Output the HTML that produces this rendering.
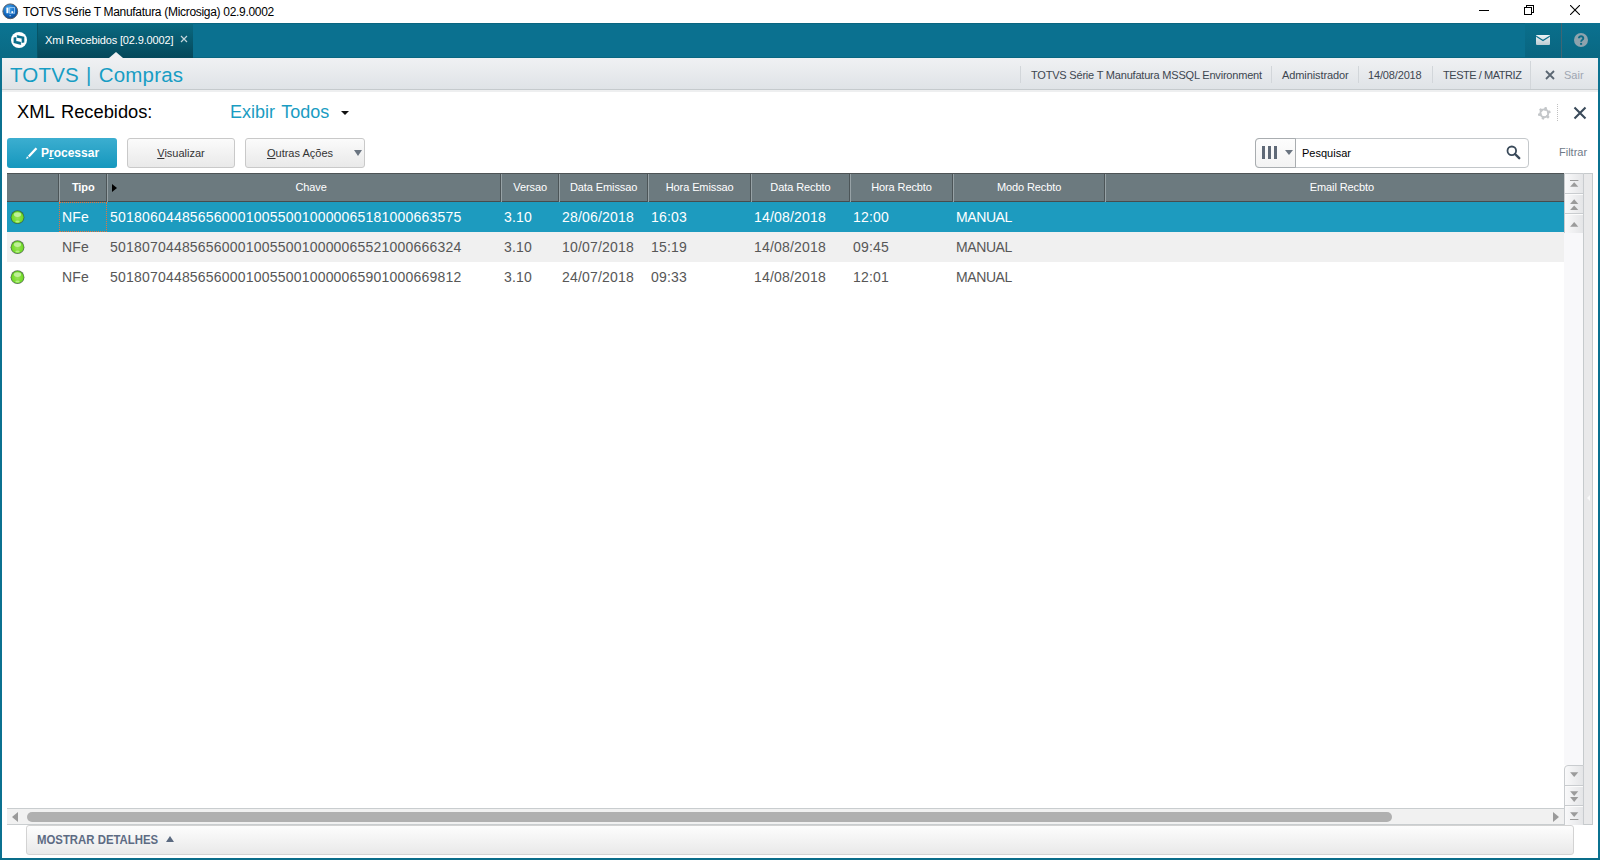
<!DOCTYPE html>
<html><head><meta charset="utf-8">
<style>
*{margin:0;padding:0;box-sizing:border-box}
html,body{width:1600px;height:860px;overflow:hidden;background:#fff;font-family:"Liberation Sans",sans-serif}
.a{position:absolute}
.nw{white-space:nowrap}
#titlebar{left:0;top:0;width:1600px;height:23px;background:#fff}
#tabbar{left:0;top:23px;width:1600px;height:35px;background:#0b7190}
.htxt{position:absolute;top:68px;font-size:11px;color:#3d4650;white-space:nowrap;line-height:14px}
.hsep{position:absolute;top:66px;width:1px;height:17px;background:#d2d6da}
.btn{position:absolute;top:138px;height:30px;border:1px solid #c9c9c9;border-radius:3px;background:linear-gradient(#fbfbfb,#e9e9e9);font-size:11px;color:#333;text-align:center;line-height:28px;white-space:nowrap}
.u{text-decoration:underline}
#grid{left:7px;top:173px;width:1557px;height:636px;background:#fff}
.gh{position:absolute;left:0;top:0;width:1557px;height:29px;background:#6c7a7f;border-top:1px solid #4e5456;border-bottom:1px solid #474c4e}
.cs{position:absolute;top:0;width:2px;height:28px;border-left:1px solid #4c5558;border-right:1px solid #97a2a6}
.hc{position:absolute;top:7px;width:200px;text-align:center;font-size:11px;letter-spacing:-0.1px;color:#fff;white-space:nowrap;line-height:12px}
.row{position:absolute;left:0;width:1557px;height:30px}
.rc{position:absolute;top:6.5px;font-size:14px;letter-spacing:0.2px;white-space:nowrap;line-height:16px}
.led{position:absolute;left:4px;top:8px;width:14px;height:14px;border-radius:50%;background:radial-gradient(circle at 45% 35%,#e2f7b8 0,#98d64a 35%,#4e9e1c 100%);border:1px solid #5a8a3a}
.sbtn{position:absolute;left:1564px;width:19px;border:1px solid #d3d6d8;background:linear-gradient(90deg,#fafafa,#e6e7e8)}
.tri-up{position:absolute;width:0;height:0;border-left:4px solid transparent;border-right:4px solid transparent;border-bottom:6px solid #9a9a9a}
.tri-dn{position:absolute;width:0;height:0;border-left:4px solid transparent;border-right:4px solid transparent;border-top:6px solid #9a9a9a}
</style></head>
<body>
<svg width="0" height="0" style="position:absolute">
  <defs>
    <radialGradient id="lg" cx="50%" cy="55%" r="55%"><stop offset="0" stop-color="#9ae05a"/><stop offset="0.75" stop-color="#74dc2a"/><stop offset="1" stop-color="#5ccc18"/></radialGradient>
    <g id="led">
      <circle cx="7.5" cy="8.2" r="6.9" fill="#3f5e3c" opacity="0.85"/>
      <circle cx="7.5" cy="8.2" r="6.1" fill="url(#lg)"/>
      <ellipse cx="7.5" cy="5.6" rx="3.6" ry="2.3" fill="#d6f6b8" opacity="0.75"/>
      <ellipse cx="7.5" cy="12.4" rx="2.2" ry="1" fill="#c4f49a" opacity="0.8"/>
    </g>
  </defs>
</svg>
<!-- title bar -->
<div id="titlebar" class="a">
  <svg class="a" style="left:2px;top:3px" width="17" height="17" viewBox="0 0 17 17">
    <defs><radialGradient id="tg" cx="40%" cy="30%" r="70%"><stop offset="0" stop-color="#4aa8ee"/><stop offset="0.55" stop-color="#1670c8"/><stop offset="1" stop-color="#0a4a98"/></radialGradient></defs>
    <circle cx="8.3" cy="8.3" r="7.4" fill="url(#tg)" stroke="#5a6068" stroke-width="1"/>
    <rect x="4.4" y="4.6" width="2" height="5.6" fill="#fff"/>
    <rect x="7.6" y="4.6" width="5" height="5.6" fill="none" stroke="#9cc8f0" stroke-width="0.9"/>
    <rect x="9.4" y="8.2" width="1.8" height="1.8" fill="#fff"/>
    <rect x="7.4" y="12" width="1.6" height="1.2" fill="#8ab0d8"/>
  </svg>
  <div class="a nw" style="left:23px;top:4.6px;font-size:12px;letter-spacing:-0.3px;color:#000;line-height:14px">TOTVS Série T Manufatura (Microsiga) 02.9.0002</div>
  <div class="a" style="left:1479px;top:10px;width:10px;height:1px;background:#000"></div>
  <div class="a" style="left:1526px;top:5px;width:8px;height:8px;border:1px solid #000"></div>
  <div class="a" style="left:1524px;top:7px;width:8px;height:8px;border:1px solid #000;background:#fff"></div>
  <svg class="a" style="left:1570px;top:5px" width="10" height="10" viewBox="0 0 10 10"><path d="M0 0L10 10M10 0L0 10" stroke="#000" stroke-width="1.1"/></svg>
</div>

<!-- frame borders -->
<div class="a" style="left:0;top:58px;width:2px;height:802px;background:#0b7190"></div>
<div class="a" style="left:1598px;top:58px;width:2px;height:802px;background:#0b7190"></div>
<div class="a" style="left:0;top:858px;width:1600px;height:2px;background:#0a6d8a"></div>

<!-- tab bar -->
<div id="tabbar" class="a">
  <div class="a" style="left:0;top:0;width:37px;height:35px;background:linear-gradient(#0b7492,#0a6a84)"></div>
  <svg class="a" style="left:11px;top:9px" width="16" height="16" viewBox="0 0 16 16">
    <circle cx="8" cy="8" r="8" fill="#fff"/>
    <path d="M2.6 5.4 L5.6 4.9 L5.6 8.9 L10.2 9.9 L10.2 13.0 L2.6 11.0 Z" fill="#0b6f8c"/>
    <path d="M5.7 2.9 L13.3 4.8 L13.3 10.6 L10.3 11.1 L10.3 6.6 L5.7 5.7 Z" fill="#0b6f8c"/>
    <path d="M5.65 2.6 V9.2 M10.35 6.6 V13.2" stroke="#fff" stroke-width="0.6"/>
  </svg>
  <div class="a" style="left:37px;top:0;width:1px;height:35px;background:#075466"></div>
  <div class="a" style="left:38px;top:0;width:155px;height:35px;background:linear-gradient(#0a6a82,#05485a)"></div>
  <div class="a nw" style="left:45px;top:11px;font-size:11px;color:#fff;line-height:13px;letter-spacing:-0.15px">Xml Recebidos [02.9.0002]</div>
  <svg class="a" style="left:180px;top:12px" width="8" height="8" viewBox="0 0 8 8"><path d="M1 1L7 7M7 1L1 7" stroke="#c5d6dc" stroke-width="1.2"/></svg>
  <div class="a" style="left:109px;top:29px;width:0;height:0;border-left:7px solid transparent;border-right:7px solid transparent;border-bottom:6px solid #eff0f2"></div>
  <div class="a" style="left:1525px;top:0;width:37px;height:35px;background:linear-gradient(#0a6f8c,#096580)"></div>
  <div class="a" style="left:1562px;top:0;width:38px;height:35px;background:linear-gradient(#0b7190,#096882)"></div>
  <div class="a" style="left:1561px;top:0;width:1px;height:35px;background:#3f6674"></div>
  <svg class="a" style="left:1536px;top:12px" width="14" height="10" viewBox="0 0 14 10">
    <defs><linearGradient id="mg" x1="0" y1="0" x2="0" y2="1"><stop offset="0" stop-color="#eef3f6"/><stop offset="1" stop-color="#bccbd2"/></linearGradient></defs>
    <rect x="0" y="0" width="14" height="10" rx="1" fill="url(#mg)"/>
    <path d="M0.2 1.2 L7 5.6 L13.8 1.2" fill="none" stroke="#0a6d8a" stroke-width="1.3"/>
  </svg>
  <svg class="a" style="left:1574px;top:10px" width="15" height="15" viewBox="0 0 15 15">
    <circle cx="7" cy="7" r="7" fill="#8ea3ad"/>
    <path d="M4.9 5.2 C4.9 2.6 9.3 2.6 9.3 5.2 C9.3 6.9 7.1 6.9 7.1 8.8" fill="none" stroke="#0b6b86" stroke-width="1.9"/>
    <rect x="6.1" y="9.9" width="2" height="1.9" fill="#0b6b86"/>
  </svg>
</div>

<div class="a" style="left:193px;top:23px;width:1332px;height:1px;background:#0a6580"></div>
<div class="a" style="left:193px;top:57px;width:1332px;height:1px;background:#096781"></div>
<!-- header -->
<div class="a" style="left:2px;top:58px;width:1596px;height:31px;background:linear-gradient(#f0f1f3,#dfe3e7)"></div>
<div class="a" style="left:2px;top:89px;width:1596px;height:1px;background:#c5cacd"></div>
<div class="a" style="left:2px;top:90px;width:1596px;height:2px;background:#eeeff0"></div>
<div class="a nw" style="left:10px;top:63px;font-size:20.5px;letter-spacing:0.2px;word-spacing:1.2px;color:#179dc4;line-height:24px">TOTVS | Compras</div>
<div class="hsep" style="left:1020px"></div>
<div class="htxt" style="left:1031px;letter-spacing:-0.2px">TOTVS Série T Manufatura MSSQL Environment</div>
<div class="hsep" style="left:1271px"></div>
<div class="htxt" style="left:1282px;letter-spacing:-0.1px">Administrador</div>
<div class="hsep" style="left:1358px"></div>
<div class="htxt" style="left:1368px;letter-spacing:-0.15px">14/08/2018</div>
<div class="hsep" style="left:1432px"></div>
<div class="htxt" style="left:1443px;letter-spacing:-0.45px">TESTE / MATRIZ</div>
<div class="hsep" style="left:1530px;top:61px;height:28px"></div>
<svg class="a" style="left:1545px;top:70px" width="10" height="10" viewBox="0 0 10 10"><path d="M1 1L9 9M9 1L1 9" stroke="#5a6672" stroke-width="1.8"/></svg>
<div class="htxt" style="left:1564px;color:#9fa6b2">Sair</div>

<!-- page title row -->
<div class="a nw" style="left:17px;top:101px;font-size:18.3px;word-spacing:2px;color:#000;line-height:22px">XML Recebidos:</div>
<div class="a nw" style="left:230px;top:101px;font-size:18px;word-spacing:1.6px;color:#1a9cc2;line-height:22px">Exibir Todos</div>
<div class="a" style="left:341px;top:111px;width:0;height:0;border-left:4px solid transparent;border-right:4px solid transparent;border-top:4px solid #111"></div>
<svg class="a" style="left:1537px;top:105.5px" width="15" height="15" viewBox="0 0 15 15">
  <g fill="#c4c7ca"><rect x="6.0" y="0.9" width="2.6" height="3.6" rx="0.8" transform="rotate(15 7.3 7.3)"/><rect x="6.0" y="0.9" width="2.6" height="3.6" rx="0.8" transform="rotate(75 7.3 7.3)"/><rect x="6.0" y="0.9" width="2.6" height="3.6" rx="0.8" transform="rotate(135 7.3 7.3)"/><rect x="6.0" y="0.9" width="2.6" height="3.6" rx="0.8" transform="rotate(195 7.3 7.3)"/><rect x="6.0" y="0.9" width="2.6" height="3.6" rx="0.8" transform="rotate(255 7.3 7.3)"/><rect x="6.0" y="0.9" width="2.6" height="3.6" rx="0.8" transform="rotate(315 7.3 7.3)"/></g>
  <circle cx="7.3" cy="7.3" r="3.95" fill="none" stroke="#c4c7ca" stroke-width="1.9"/>
</svg>
<div class="a" style="left:1557px;top:104px;width:1px;height:17px;border-left:1px dotted #c0c0c0"></div>
<svg class="a" style="left:1573px;top:106px" width="14" height="14" viewBox="0 0 14 14"><path d="M1.5 1.5L12.5 12.5M12.5 1.5L1.5 12.5" stroke="#3a4a5a" stroke-width="2.1"/></svg>

<!-- buttons -->
<div class="a" style="left:7px;top:138px;width:110px;height:30px;border-radius:3px;background:linear-gradient(#3caed0,#1597bd)"></div>
<svg class="a" style="left:26px;top:147px" width="12" height="12" viewBox="0 0 12 12"><path d="M1.9 8.7 L9.6 0.4 L11.3 2.0 L3.6 10.3 Z" fill="#fff"/><path d="M0.1 11.9 L1.0 9.3 L2.8 11.0 Z" fill="#fff"/></svg>
<div class="a nw" style="left:41px;top:145px;font-size:12px;font-weight:bold;color:#fff;line-height:16px">P<span class="u">r</span>ocessar</div>
<div class="btn" style="left:127px;width:108px"><span class="u">V</span>isualizar</div>
<div class="btn" style="left:245px;width:120px;padding-right:10px"><span class="u">O</span>utras Ações</div>
<div class="a" style="left:354px;top:150px;width:0;height:0;border-left:4px solid transparent;border-right:4px solid transparent;border-top:6px solid #6a7480"></div>

<!-- search -->
<div class="a" style="left:1255px;top:138px;width:274px;height:30px;border:1px solid #c4c8cb;border-radius:4px;background:#fff"></div>
<div class="a" style="left:1255px;top:138px;width:41px;height:30px;border:1px solid #a9adb0;border-radius:4px 0 0 4px;background:linear-gradient(#fdfdfd,#f3f3f3)"></div>
<div class="a" style="left:1262px;top:146px;width:3px;height:13px;background:#5f6977"></div>
<div class="a" style="left:1268px;top:146px;width:3px;height:13px;background:#5f6977"></div>
<div class="a" style="left:1274px;top:146px;width:3px;height:13px;background:#5f6977"></div>
<div class="a" style="left:1285px;top:150px;width:0;height:0;border-left:4px solid transparent;border-right:4px solid transparent;border-top:5px solid #6a7480"></div>
<div class="a nw" style="left:1302px;top:146px;font-size:11px;color:#000;line-height:14px">Pesquisar</div>
<svg class="a" style="left:1506px;top:145px" width="15" height="15" viewBox="0 0 15 15"><circle cx="5.8" cy="5.8" r="4.3" fill="none" stroke="#3a4a5a" stroke-width="1.8"/><path d="M9 9 L13.2 13.2" stroke="#3a4a5a" stroke-width="2.4" stroke-linecap="round"/></svg>
<div class="a nw" style="left:1559px;top:145px;font-size:11px;color:#6f7a88;line-height:14px">Filtrar</div>

<!-- grid -->
<div id="grid" class="a">
  <div class="gh">
    <div class="cs" style="left:51px"></div>
    <div class="cs" style="left:99px"></div>
    <div class="cs" style="left:493px"></div>
    <div class="cs" style="left:551px"></div>
    <div class="cs" style="left:640px"></div>
    <div class="cs" style="left:743px"></div>
    <div class="cs" style="left:842px"></div>
    <div class="cs" style="left:945px"></div>
    <div class="cs" style="left:1097px"></div>
    <div class="hc" style="left:-23.8px;font-weight:bold">Tipo</div>
    <div class="a" style="left:105px;top:10px;width:0;height:0;border-top:4px solid transparent;border-bottom:4px solid transparent;border-left:5px solid #000"></div>
    <div class="hc" style="left:204.1px">Chave</div>
    <div class="hc" style="left:423.2px">Versao</div>
    <div class="hc" style="left:496.6px">Data Emissao</div>
    <div class="hc" style="left:592.7px">Hora Emissao</div>
    <div class="hc" style="left:693.4px">Data Recbto</div>
    <div class="hc" style="left:794.5px">Hora Recbto</div>
    <div class="hc" style="left:922.1px">Modo Recbto</div>
    <div class="hc" style="left:1234.9px">Email Recbto</div>
  </div>
  <div class="row" style="top:29px;background:#1d9bbf;color:#fff">
    <svg class="a" style="left:3px;top:7px" width="16" height="16" viewBox="0 0 16 16"><use href="#led"/></svg>
    <div class="a" style="left:52px;top:0;width:48px;height:30px;border:1px dotted #e8743a"></div>
    <div class="rc" style="left:55px">NFe</div>
    <div class="rc" style="left:103px">50180604485656000100550010000065181000663575</div>
    <div class="rc" style="left:497px">3.10</div>
    <div class="rc" style="left:555px">28/06/2018</div>
    <div class="rc" style="left:644px">16:03</div>
    <div class="rc" style="left:747px">14/08/2018</div>
    <div class="rc" style="left:846px">12:00</div>
    <div class="rc" style="left:949px;letter-spacing:-0.4px">MANUAL</div>
  </div>
  <div class="row" style="top:59px;background:#f0f0f0;color:#575757">
    <svg class="a" style="left:3px;top:7px" width="16" height="16" viewBox="0 0 16 16"><use href="#led"/></svg>
    <div class="rc" style="left:55px">NFe</div>
    <div class="rc" style="left:103px">50180704485656000100550010000065521000666324</div>
    <div class="rc" style="left:497px">3.10</div>
    <div class="rc" style="left:555px">10/07/2018</div>
    <div class="rc" style="left:644px">15:19</div>
    <div class="rc" style="left:747px">14/08/2018</div>
    <div class="rc" style="left:846px">09:45</div>
    <div class="rc" style="left:949px;letter-spacing:-0.4px">MANUAL</div>
  </div>
  <div class="row" style="top:89px;background:#fff;color:#575757">
    <svg class="a" style="left:3px;top:7px" width="16" height="16" viewBox="0 0 16 16"><use href="#led"/></svg>
    <div class="rc" style="left:55px">NFe</div>
    <div class="rc" style="left:103px">50180704485656000100550010000065901000669812</div>
    <div class="rc" style="left:497px">3.10</div>
    <div class="rc" style="left:555px">24/07/2018</div>
    <div class="rc" style="left:644px">09:33</div>
    <div class="rc" style="left:747px">14/08/2018</div>
    <div class="rc" style="left:846px">12:01</div>
    <div class="rc" style="left:949px;letter-spacing:-0.4px">MANUAL</div>
  </div>
</div>

<!-- vertical scrollbar -->
<div class="a" style="left:1564px;top:233px;width:19px;height:532px;background:#f8f8fa"></div>
<div class="a" style="left:1583px;top:173px;width:10px;height:652px;border:1px solid #c6cacc;background:#e9e9ea"></div>
<div class="a" style="left:1587px;top:495px;width:0;height:0;border-top:3.5px solid transparent;border-bottom:3.5px solid transparent;border-right:3.5px solid #fafafa"></div>
<svg class="a" style="left:1564px;top:173px" width="20" height="61" viewBox="0 0 20 61">
  <defs><linearGradient id="sg" x1="0" y1="0" x2="1" y2="0"><stop offset="0" stop-color="#fafafb"/><stop offset="1" stop-color="#e3e4e6"/></linearGradient></defs>
  <rect x="0" y="0" width="20" height="60" fill="url(#sg)"/>
  <path d="M0.5 60 V0.5 H19.5 V60" fill="none" stroke="#c9cccf" stroke-width="1"/>
  <rect x="0" y="20" width="20" height="1" fill="#c9cccf"/><rect x="1" y="21" width="18" height="1" fill="#fbfbfb"/>
  <rect x="0" y="40" width="20" height="1" fill="#c9cccf"/><rect x="1" y="41" width="18" height="1" fill="#fbfbfb"/>
  <g fill="#9b9b9b">
    <rect x="6" y="7" width="8.4" height="1"/>
    <path d="M6.1 13.7 H14.3 L10.2 9.2 Z"/>
    <path d="M6.1 31 H14.3 L10.2 26.3 Z"/>
    <path d="M6.1 37 H14.3 L10.2 32.4 Z"/>
    <path d="M6.1 53.7 H14.3 L10.2 49 Z"/>
  </g>
</svg>
<svg class="a" style="left:1564px;top:765px" width="20" height="60" viewBox="0 0 20 60">
  <path d="M0 60 V4 Q0 0 4 0 H20 V60 Z" fill="url(#sg)"/>
  <path d="M0.5 60 V4 Q0.5 0.5 4 0.5 H19.5 V60" fill="none" stroke="#c9cccf" stroke-width="1"/>
  <rect x="0" y="20" width="20" height="1" fill="#c9cccf"/><rect x="1" y="21" width="18" height="1" fill="#fbfbfb"/>
  <rect x="0" y="40" width="20" height="1" fill="#c9cccf"/><rect x="1" y="41" width="18" height="1" fill="#fbfbfb"/>
  <g fill="#9b9b9b">
    <path d="M6.1 7.3 H14.3 L10.2 12 Z"/>
    <path d="M6.1 26.2 H14.3 L10.2 31 Z"/>
    <path d="M6.1 32.1 H14.3 L10.2 37 Z"/>
    <path d="M6.1 47.2 H14.3 L10.2 52 Z"/>
    <rect x="6" y="54" width="8.4" height="1"/>
  </g>
</svg>

<!-- horizontal scrollbar -->
<div class="a" style="left:7px;top:808px;width:1557px;height:17px;border-top:1px solid #c9cdcf;border-bottom:1px solid #c9cdcf;background:#f1f1f1"></div>
<div class="a" style="left:12px;top:812px;width:0;height:0;border-top:5px solid transparent;border-bottom:5px solid transparent;border-right:6px solid #9a9a9a"></div>
<div class="a" style="left:27px;top:812px;width:1365px;height:10px;border-radius:5px;background:#b0b0b0"></div>
<div class="a" style="left:1553px;top:812px;width:0;height:0;border-top:5px solid transparent;border-bottom:5px solid transparent;border-left:6px solid #9a9a9a"></div>

<!-- bottom details bar -->
<div class="a" style="left:26px;top:825px;width:1548px;height:30px;border:1px solid #d3d3d3;border-radius:3px;background:linear-gradient(#fdfdfd,#e9e9e9)"></div>
<div class="a nw" style="left:37px;top:832px;font-size:13px;font-weight:bold;color:#5d6b83;line-height:15px;transform:scaleX(0.875);transform-origin:0 0">MOSTRAR DETALHES</div>
<div class="a" style="left:166px;top:836px;width:0;height:0;border-left:4px solid transparent;border-right:4px solid transparent;border-bottom:6px solid #5b6a80"></div>
</body></html>
